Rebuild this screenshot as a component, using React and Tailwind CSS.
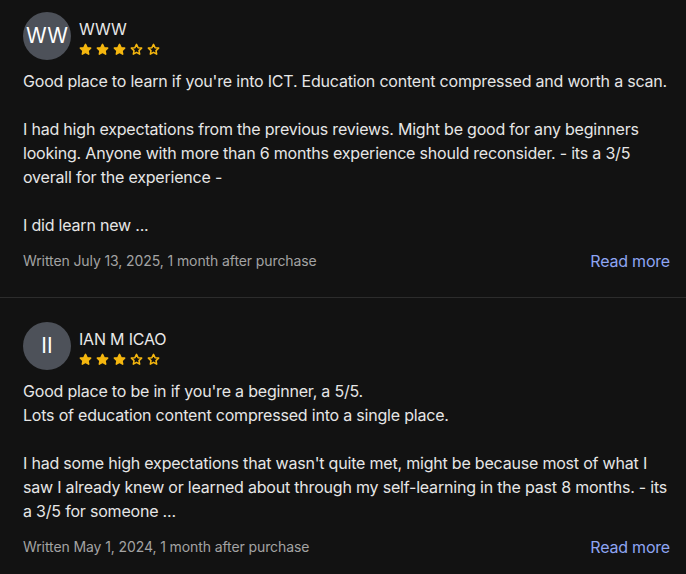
const reviews = [
  {
    initials: "WW",
    name: "WWW",
    rating: 3,
    paragraphs: [
      "Good place to learn if you're into ICT. Education content compressed and worth a scan.",
      "I had high expectations from the previous reviews. Might be good for any beginners looking. Anyone with more than 6 months experience should reconsider. - its a 3/5 overall for the experience -",
      "I did learn new ...",
    ],
    written: "Written July 13, 2025, 1 month after purchase",
  },
  {
    initials: "II",
    name: "IAN M ICAO",
    rating: 3,
    paragraphs: [
      "Good place to be in if you're a beginner, a 5/5.\nLots of education content compressed into a single place.",
      "I had some high expectations that wasn't quite met, might be because most of what I saw I already knew or learned about through my self-learning in the past 8 months. - its a 3/5 for someone ...",
    ],
    written: "Written May 1, 2024, 1 month after purchase",
  },
];

function Star({ filled }) {
  return (
    <svg viewBox="0 0 24 24" className="h-[13px] w-[13px]" aria-hidden>
      <path
        d="M12 2.5l2.9 6.1 6.6.8-4.9 4.6 1.3 6.6L12 17.3l-5.9 3.3 1.3-6.6-4.9-4.6 6.6-.8z"
        fill={filled ? "#f5b70f" : "none"}
        stroke="#f5b70f"
        strokeWidth="2.8"
        strokeLinejoin="round"
      />
    </svg>
  );
}

function Review({ review, first }) {
  return (
    <div
      className={`pl-[23px] pr-[16px] pb-6 ${
        first ? "pt-[12px]" : "pt-6 border-t border-[#2c2c2c]"
      }`}
    >
      <div className="flex items-center gap-2">
        <div className="flex h-12 w-12 shrink-0 items-center justify-center rounded-full bg-[#4d5159] text-[21px] text-white">
          {review.initials}
        </div>
        <div className="flex flex-col">
          <span className="text-base leading-6 tracking-[-0.2px] text-[#e8e8e8]">{review.name}</span>
          <div className="mt-0.5 flex gap-[4px]">
            {[0, 1, 2, 3, 4].map((i) => (
              <Star key={i} filled={i < review.rating} />
            ))}
          </div>
        </div>
      </div>

      <div className="mt-[9px] text-base leading-6 tracking-[-0.2px] text-[#e6e6e6]">
        {review.paragraphs.map((p, i) => (
          <p key={i} className={`whitespace-pre-line ${i > 0 ? "mt-6" : ""}`}>
            {p}
          </p>
        ))}
      </div>

      <div className="mt-3 flex items-center justify-between">
        <span className="text-sm tracking-[-0.1px] text-[#a3a3a3]">{review.written}</span>
        <span className="text-base leading-6 tracking-[-0.2px] text-[#8ea5f2]">Read more</span>
      </div>
    </div>
  );
}

export default function App() {
  return (
    <div
      className="min-h-[574px] w-[686px] bg-[#121212]"
      style={{ fontFamily: "Inter, 'Noto Sans', sans-serif" }}
    >
      {reviews.map((r, i) => (
        <Review key={i} review={r} first={i === 0} />
      ))}
    </div>
  );
}
